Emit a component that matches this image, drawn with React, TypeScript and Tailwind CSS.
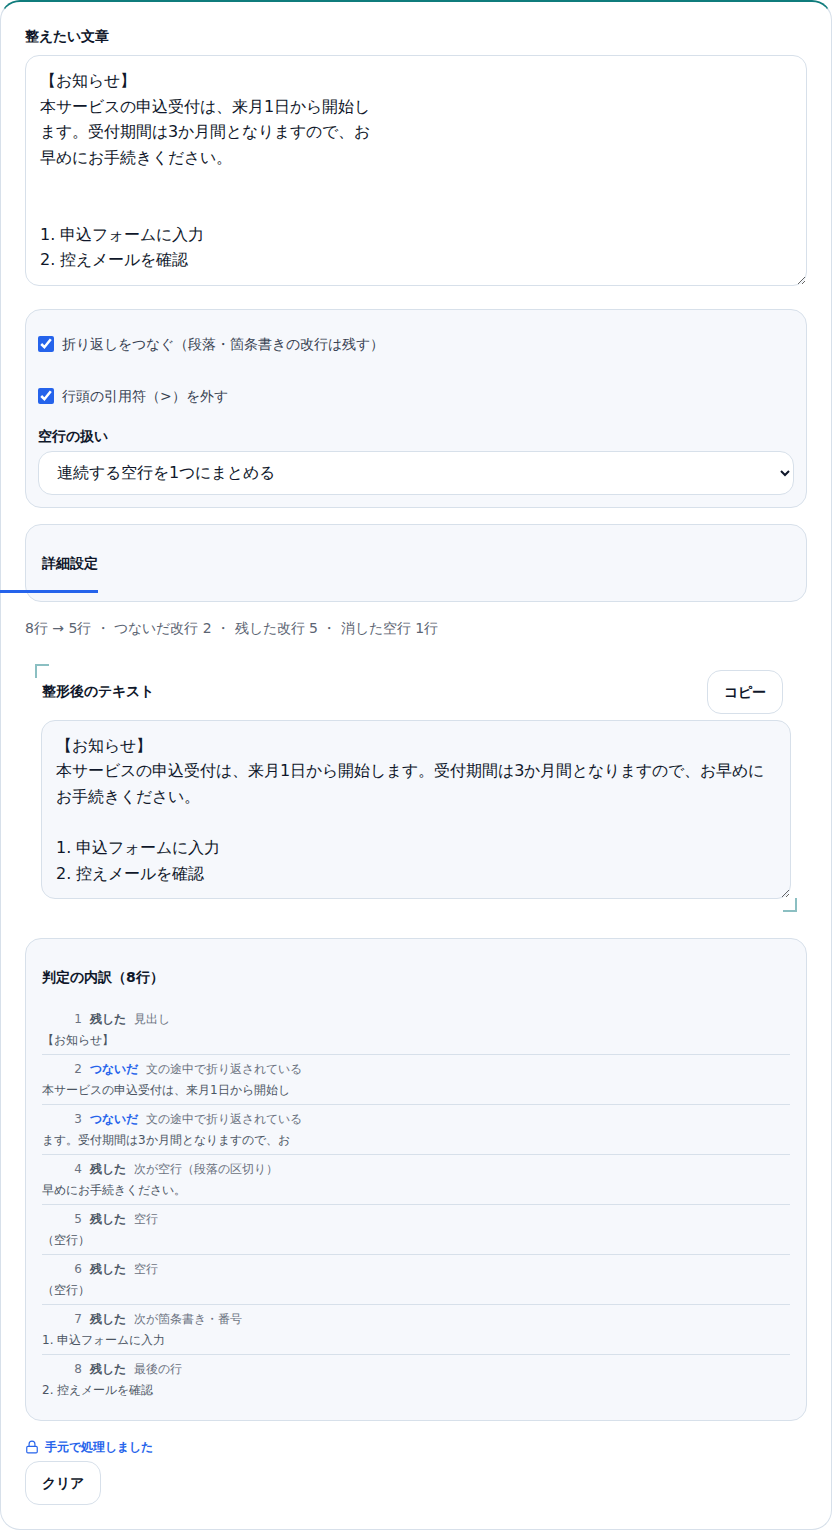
import React from 'react';
import { Lock } from 'lucide-react';

const inputText = `【お知らせ】
本サービスの申込受付は、来月1日から開始し
ます。受付期間は3か月間となりますので、お
早めにお手続きください。


1. 申込フォームに入力
2. 控えメールを確認`;

const outputText = `【お知らせ】
本サービスの申込受付は、来月1日から開始します。受付期間は3か月間となりますので、お早めにお手続きください。

1. 申込フォームに入力
2. 控えメールを確認`;

const rows = [
    { n: 1, joined: false, reason: '見出し', text: '【お知らせ】' },
    { n: 2, joined: true, reason: '文の途中で折り返されている', text: '本サービスの申込受付は、来月1日から開始し' },
    { n: 3, joined: true, reason: '文の途中で折り返されている', text: 'ます。受付期間は3か月間となりますので、お' },
    { n: 4, joined: false, reason: '次が空行（段落の区切り）', text: '早めにお手続きください。' },
    { n: 5, joined: false, reason: '空行', text: '（空行）' },
    { n: 6, joined: false, reason: '空行', text: '（空行）' },
    { n: 7, joined: false, reason: '次が箇条書き・番号', text: '1. 申込フォームに入力' },
    { n: 8, joined: false, reason: '最後の行', text: '2. 控えメールを確認' },
];

export default function App() {
    return (
        <div className="bg-white font-['DejaVu_Sans',sans-serif] text-[#0f172a]">
            <div className="rounded-[20px] border border-[#d7e0ea] border-t-2 border-t-[#0f7c7c] px-6 pt-6 pb-6">

                {/* Input */}
                <label className="block text-sm font-bold leading-[21px] mb-2">整えたい文章</label>
                <textarea
                    rows={8}
                    defaultValue={inputText}
                    className="block w-full rounded-[14px] border border-[#d7e0ea] bg-white px-[14px] py-3 text-base leading-[25.6px] text-[#0f172a] mb-[23px]"
                />

                {/* Options */}
                <div className="rounded-2xl border border-[#d7e0ea] bg-[#f6f8fc] p-3">
                    <label className="flex items-center gap-2 h-11 text-sm text-[#374151] mb-2">
                        <input type="checkbox" defaultChecked className="w-4 h-4 accent-[#2563eb]" />
                        折り返しをつなぐ（段落・箇条書きの改行は残す）
                    </label>
                    <label className="flex items-center gap-2 h-11 text-sm text-[#374151]">
                        <input type="checkbox" defaultChecked className="w-4 h-4 accent-[#2563eb]" />
                        行頭の引用符（&gt;）を外す
                    </label>
                    <div className="text-sm font-bold leading-[21px] mt-2 mb-1">空行の扱い</div>
                    <select className="block w-full h-11 rounded-[14px] border border-[#d7e0ea] bg-white px-[14px] text-base text-[#0f172a]">
                        <option>連続する空行を1つにまとめる</option>
                    </select>
                </div>

                {/* Details */}
                <div className="mt-4 rounded-2xl border border-[#d7e0ea] bg-[#f6f8fc] px-4 py-3">
                    <div className="relative h-[52px] flex items-center text-sm font-bold">
                        詳細設定
                        <span className="absolute left-[-42px] bottom-[-4px] w-[98px] h-[3px] bg-[#2563eb]" />
                    </div>
                </div>

                <p className="mt-4 text-sm leading-[21px] text-[#5b6472]">
                    8行 → 5行 ・ つないだ改行 2 ・ 残した改行 5 ・ 消した空行 1行
                </p>

                {/* Result */}
                <div className="relative mx-4 mt-[31px] pb-[7px]">
                    <span className="absolute -left-[6px] -top-[6px] w-[14px] h-[14px] border-l-2 border-t-2 border-[#8bbfc2]" />
                    <span className="absolute -right-[6px] bottom-[-6px] w-[14px] h-[14px] border-r-2 border-b-2 border-[#8bbfc2]" />
                    <div className="flex items-center justify-between pl-px pr-2 mb-[6px]">
                        <span className="text-sm font-bold mb-[2px]">整形後のテキスト</span>
                        <button className="h-11 w-[76px] rounded-[14px] border border-[#d7e0ea] bg-white text-sm font-bold">コピー</button>
                    </div>
                    <textarea
                        rows={6}
                        defaultValue={outputText}
                        className="block w-full rounded-[14px] border border-[#d7e0ea] bg-[#f6f8fc] px-[14px] py-3 text-base leading-[25.6px] text-[#0f172a]"
                    />
                </div>

                {/* Breakdown */}
                <div className="mt-8 rounded-2xl border border-[#d7e0ea] bg-[#f6f8fc] px-4 pt-3 pb-4">
                    <div className="h-[52px] flex items-center text-sm font-bold mb-[2px]">判定の内訳（8行）</div>
                    {rows.map((r, i) => (
                        <div key={r.n} className={`py-[5px] text-xs leading-[18px] ${i < rows.length - 1 ? 'border-b border-[#d7e0ea]' : ''}`}>
                            <div className="flex gap-2 mb-[3px]">
                                <span className="w-10 text-right text-[#6b7280]">{r.n}</span>
                                <span className={`font-bold ${r.joined ? 'text-[#2563eb]' : 'text-[#4b5563]'}`}>{r.joined ? 'つないだ' : '残した'}</span>
                                <span className="text-[#6b7280]">{r.reason}</span>
                            </div>
                            <div className="text-[#4b5563]">{r.text}</div>
                        </div>
                    ))}
                </div>

                {/* Footer */}
                <div className="mt-[17px] flex items-center gap-[6px] text-xs leading-[18px] font-semibold text-[#2563eb]">
                    <Lock size={14} />
                    手元で処理しました
                </div>
                <button className="mt-[5px] block h-11 w-[76px] rounded-[14px] border border-[#d7e0ea] bg-white text-sm font-bold">クリア</button>
            </div>
        </div>
    );
}
